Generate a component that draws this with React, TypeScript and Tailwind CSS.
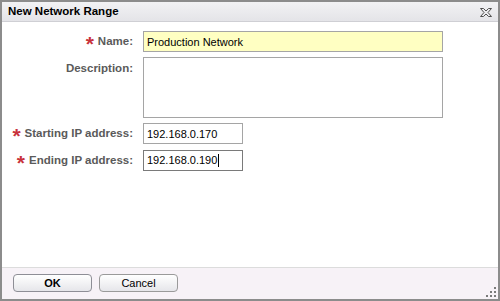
import React from 'react';

const font = { fontFamily: '"Liberation Sans", Arial, sans-serif' };

function Req() {
  return <span className="relative top-[2px] mr-[4px] text-[21px] font-bold leading-none text-[#c8323c]">*</span>;
}

function Row({ label, required, children, top = false }: { label: string; required?: boolean; children: React.ReactNode; top?: boolean }) {
  return (
    <div className={`flex ${top ? 'items-start' : 'items-center'} gap-[10px]`}>
      <div className={`flex w-[131px] shrink-0 items-center justify-end text-[11.5px] font-bold text-[#5a5a5a] ${top ? 'pt-[3px]' : ''}`}>
        {required ? <Req /> : null}
        <span>{label}</span>
      </div>
      {children}
    </div>
  );
}

function CloseIcon() {
  return (
    <svg width="14" height="11" viewBox="0 0 14 11" className="block">
      <path d="M1.5 1.5 H4.5 L7 4 L9.5 1.5 H12.5 L9 5.5 L12.5 9.5 H9.5 L7 7 L4.5 9.5 H1.5 L5 5.5 Z" fill="none" stroke="#505050" strokeWidth="1" />
    </svg>
  );
}

function Grip() {
  const dots = [[8, 0], [4, 4], [8, 4], [0, 8], [4, 8], [8, 8]];
  return (
    <svg width="11" height="11" viewBox="0 0 11 11" className="absolute bottom-[1px] right-[1px]">
      {dots.map(([x, y]) => <rect key={`${x}-${y}`} x={x} y={y} width="2" height="2" fill="#7a7a7a" />)}
    </svg>
  );
}

export default function App() {
  return (
    <div className="h-[301px] w-[500px] overflow-hidden bg-white" style={font}>
      <div className="relative flex h-full flex-col border-2 border-[#8c8c8c]">
        <div className="flex h-[20px] items-center justify-between border-b border-[#cfcfd4] bg-gradient-to-b from-[#f2f2f4] to-[#e4e4e8] pl-[6px] pr-[4px]">
          <span className="text-[11.5px] font-bold text-black">New Network Range</span>
          <span className="mr-[1px] mt-[2px]"><CloseIcon /></span>
        </div>
        <div className="flex flex-1 flex-col gap-[5px] bg-white pt-[9px]">
          <Row label="Name:" required>
            <input readOnly value="Production Network" className="h-[21px] w-[300px] border border-[#a5a5a5] bg-[#ffffc2] px-[3px] text-[11px] text-black outline-none" style={font} />
          </Row>
          <Row label="Description:" top>
            <textarea readOnly className="h-[61px] w-[300px] resize-none border border-[#a5a5a5] bg-white outline-none" />
          </Row>
          <Row label="Starting IP address:" required>
            <input readOnly value="192.168.0.170" className="h-[21px] w-[100px] border border-[#a5a5a5] bg-white px-[3px] text-[11px] text-black outline-none" style={font} />
          </Row>
          <div className="mt-[1px]">
            <Row label="Ending IP address:" required>
              <div className="flex h-[21px] w-[100px] items-center border border-[#7a7a7a] bg-white px-[3px] text-[11px] text-black">
                192.168.0.190<span className="ml-[1px] inline-block h-[13px] w-px bg-black" />
              </div>
            </Row>
          </div>
        </div>
        <div className="flex h-[32px] items-start gap-[7px] border-t border-[#dcdcdc] bg-[#f7f2f7] pl-[11px] pt-[6px]">
          <button className="h-[18px] w-[79px] rounded-[4px] border border-[#8e8e96] bg-gradient-to-b from-white to-[#e6e6ea] text-[11px] font-bold text-black" style={font}>OK</button>
          <button className="h-[18px] w-[79px] rounded-[4px] border border-[#9a9a9a] bg-gradient-to-b from-white to-[#e6e6ea] text-[11px] text-black" style={font}>Cancel</button>
        </div>
        <Grip />
      </div>
    </div>
  );
}
